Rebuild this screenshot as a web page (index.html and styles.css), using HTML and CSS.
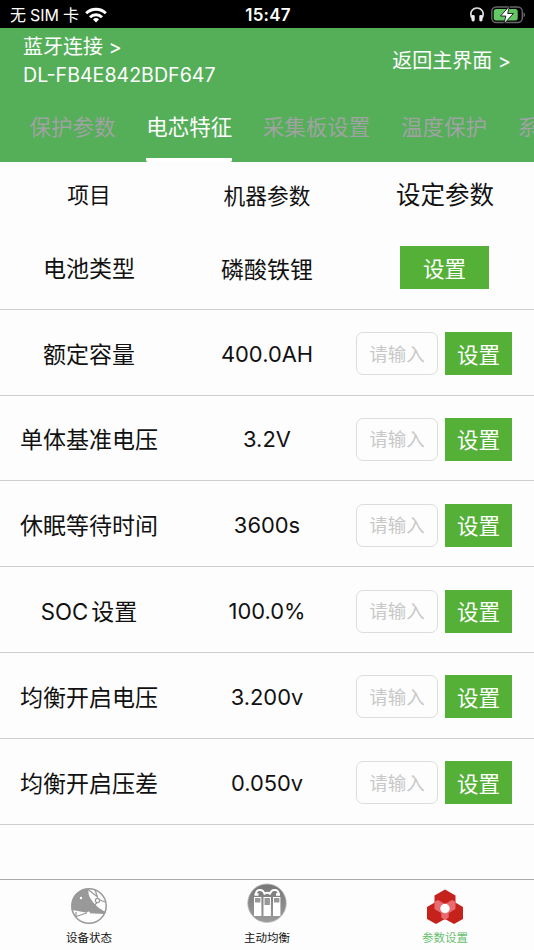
FILE: index.html
```html
<!DOCTYPE html>
<html lang="zh-CN">
<head>
  <meta charset="UTF-8">
  <meta name="viewport" content="width=device-width, initial-scale=1.0">
  <title>参数设置</title>
  <link rel="stylesheet" href="styles.css">
</head>
<body>
  <div class="status-bar">
    <div class="carrier">
      <span>无<span class="sim">SIM</span>卡</span>
      <svg class="wifi" viewBox="0 0 22 16" fill="none" stroke="#fff" stroke-width="3">
        <path d="M1.2 6.3a14 14 0 0 1 19.6 0"/>
        <path d="M5 10.3a8.6 8.6 0 0 1 12 0"/>
        <path d="M11 15.5l-3-3a4.3 4.3 0 0 1 6 0z" fill="#fff" stroke="none"/>
      </svg>
    </div>
    <div class="time">15:47</div>
    <div class="status-icons">
      <svg class="headphones" viewBox="0 0 14 15">
        <path d="M2 11C-1 5.500 2.500 1 7 1s8 4.500 5 10" fill="none" stroke="#ddd" stroke-width="1.700"/>
        <rect x="1.500" y="8" width="3.200" height="6.500" rx="1.400" fill="#eee"/>
        <rect x="9.300" y="8" width="3.200" height="6.500" rx="1.400" fill="#eee"/>
      </svg>
      <svg class="battery" viewBox="0 0 35 18">
        <rect x=".8" y="1" width="30.500" height="15.500" rx="4.500" fill="none" stroke="#676767" stroke-width="1.400"/>
        <path d="M32.500 6.300c2 .8 2 4.200 0 5z" fill="#676767"/>
        <rect x="2.700" y="2.900" width="24" height="11.700" rx="2.500" fill="#63c766"/>
        <path d="M18.500 0L9.500 10h5.300l-1.800 8 9.400-10.500h-5.700z" fill="#fff" stroke="#000" stroke-width=".8"/>
      </svg>
    </div>
  </div>

  <div class="header">
    <div class="header-top">
      <div class="device">
        <div>蓝牙连接 &gt;</div>
        <div class="device-name">DL-FB4E842BDF647</div>
      </div>
      <div class="back">返回主界面 &gt;</div>
    </div>
    <div class="tabs">
      <div class="tab">保护参数</div>
      <div class="tab active">电芯特征</div>
      <div class="tab">采集板设置</div>
      <div class="tab">温度保护</div>
      <div class="tab">系</div>
    </div>
  </div>

  <div class="content">
    <div class="row table-head">
      <div>项目</div>
      <div>机器参数</div>
      <div class="head-set">设定参数</div>
    </div>
    <div class="row">
      <div>电池类型</div>
      <div>磷酸铁锂</div>
      <div class="action center"><button class="set-btn wide">设置</button></div>
    </div>
    <div class="row">
      <div>额定容量</div>
      <div class="value">400.0AH</div>
      <div class="action"><input type="text" placeholder="请输入"><button class="set-btn">设置</button></div>
    </div>
    <div class="row">
      <div>单体基准电压</div>
      <div class="value">3.2V</div>
      <div class="action"><input type="text" placeholder="请输入"><button class="set-btn">设置</button></div>
    </div>
    <div class="row">
      <div>休眠等待时间</div>
      <div class="value">3600s</div>
      <div class="action"><input type="text" placeholder="请输入"><button class="set-btn">设置</button></div>
    </div>
    <div class="row">
      <div><span class="soc">SOC</span>设置</div>
      <div class="value">100.0%</div>
      <div class="action"><input type="text" placeholder="请输入"><button class="set-btn">设置</button></div>
    </div>
    <div class="row">
      <div>均衡开启电压</div>
      <div class="value">3.200v</div>
      <div class="action"><input type="text" placeholder="请输入"><button class="set-btn">设置</button></div>
    </div>
    <div class="row">
      <div>均衡开启压差</div>
      <div class="value">0.050v</div>
      <div class="action"><input type="text" placeholder="请输入"><button class="set-btn">设置</button></div>
    </div>
  </div>

  <div class="nav">
    <div class="nav-item">
      <svg viewBox="0 0 40 40">
        <path d="M3.500 27C1 18 3 9 10.500 5.500c3-2 6-2.500 9-2.500-.5 3 0 7 3 11 3.500 5 7 8.500 14.500 12l-2 2-14.500-.8L3.500 24z" fill="#999"/>
        <circle cx="20" cy="20" r="17.200" fill="none" stroke="#999" stroke-width="1.500"/>
        <g fill="none" stroke="#999" stroke-width="1.200">
          <path d="M7 30.500l11.500-3.700M7 26v5M19 3.500l9 7M26 3.800l2.700 8M28 16.500l-4.500 5M31 14l5 2"/>
          <circle cx="28.500" cy="14.500" r="2.100" fill="#fdfdfd"/>
        </g>
        <circle cx="12" cy="12" r="1.200" fill="#fff"/>
        <circle cx="19.500" cy="27" r="1.600" fill="#fff"/>
      </svg>
      <span>设备状态</span>
    </div>
    <div class="nav-item">
      <svg viewBox="0 0 40 40">
        <defs>
          <linearGradient id="disc" x1="0" y1="0" x2="0" y2="1">
            <stop offset="0" stop-color="#777"/>
            <stop offset="1" stop-color="#9b9b9b"/>
          </linearGradient>
        </defs>
        <circle cx="20" cy="17.200" r="19.300" fill="url(#disc)" stroke="#c4c4c4" stroke-width=".8"/>
        <g fill="#fff">
          <rect x="7" y="11" width="7.400" height="19"/>
          <rect x="16.500" y="11" width="7.400" height="19"/>
          <rect x="26" y="11" width="7.400" height="19"/>
        </g>
        <g fill="#999">
          <rect x="8" y="12" width="5.400" height="4.500"/>
          <rect x="17.500" y="12" width="5.400" height="7"/>
          <rect x="27" y="12" width="5.400" height="4.500"/>
        </g>
        <path d="M9 9C8 3 16 2 17.500 8M31.500 9C32.500 3 24.500 2 23 8M17 8.500c2-2.500 4.500-2.500 6.500 0" fill="none" stroke="#fff" stroke-width="2"/>
        <path d="M7.500 8.500h4M29 8.500h4" fill="none" stroke="#fff" stroke-width="2.400"/>
      </svg>
      <span>主动均衡</span>
    </div>
    <div class="nav-item selected">
      <svg viewBox="0 0 40 40">
        <g fill="#c5221b">
          <path d="M20 3.500l10.500 6v11.800L20 27.300 9.500 21.300V9.500z"/>
          <path d="M11 15.700l9 5.200v12l-9 5.100-9-5.100v-12z"/>
          <path d="M29 15.700l9 5.200v12l-9 5.100-9-5.100v-12z"/>
        </g>
        <g fill="#e96b70">
          <path d="M9.500 15.500l3.500-1.600 7 4v9L16 27l-6.500-4z"/>
          <path d="M30.500 15.500L27 13.900l-7 4v9l4 .1 6.500-4z"/>
          <path d="M16.300 25h7.400v6.500L20 34l-3.700-2.500z"/>
        </g>
        <circle cx="20" cy="22.500" r="4.700" fill="#fff"/>
      </svg>
      <span>参数设置</span>
    </div>
  </div>
</body>
</html>
```

FILE: styles.css
```css
* {
  box-sizing: border-box;
}

body {
  margin: 0;
  height: 950px;
  display: flex;
  flex-direction: column;
  overflow: hidden;
  background-color: #fdfdfd;
  color: #111;
  font-family: Inter, "Noto Sans CJK SC", sans-serif;
  font-weight: 400;
}

/* 状态栏 */
.status-bar {
  height: 28px;
  flex: none;
  display: grid;
  grid-template-columns: 1fr auto 1fr;
  align-items: center;
  padding: 1px 8px 0 10px;
  background-color: #000;
  color: #fff;
}

.carrier {
  display: flex;
  align-items: center;
  gap: 6px;
  font-size: 16px;
  line-height: 26px;
}

.sim {
  margin: 0 4px;
}

.wifi {
  width: 22px;
  height: 16px;
}

.time {
  font-size: 17px;
  font-weight: 600;
  letter-spacing: 0.2px;
}

.status-icons {
  display: flex;
  justify-content: flex-end;
  align-items: center;
  gap: 7px;
}

.headphones {
  width: 14px;
  height: 15px;
}

.battery {
  width: 35px;
  height: 18px;
}

/* 顶部 */
.header {
  height: 134px;
  flex: none;
  background-color: #55ae58;
  color: #fff;
}

.header-top {
  height: 64px;
  display: flex;
  justify-content: space-between;
  align-items: center;
  padding: 2px 23px 0;
  font-size: 20px;
  line-height: 28px;
}

.device-name {
  font-size: 19.6px;
}

.tabs {
  height: 70px;
  display: flex;
  gap: 30.6px;
  padding-left: 29.6px;
  overflow: hidden;
}

.tab {
  flex: none;
  font-size: 21.5px;
  line-height: 71px;
  color: #9fa3a2;
}

.tab.active {
  height: 70px;
  color: #fff;
  border-bottom: 4px solid #fff;
  border-radius: 2px;
}

/* 参数列表 */
.content {
  flex: 1;
}

.row {
  height: 85.8px;
  display: grid;
  grid-template-columns: 1fr 1fr 1fr;
  align-items: center;
  text-align: center;
  padding-top: 3px;
  border-bottom: 1.6px solid #cecece;
  font-size: 23px;
}

.row > div:first-child {
  margin-top: -2px;
}

.table-head {
  height: 62px;
  border-bottom: none;
  font-size: 21.7px;
}

.head-set {
  font-size: 24.5px;
  margin-top: -3px;
}

.value {
  font-size: 21.9px;
}

.soc {
  margin-right: 3px;
  font-size: 22.2px;
}

.action {
  display: flex;
  justify-content: flex-end;
  gap: 7px;
  padding-right: 22px;
}

.action.center {
  justify-content: center;
  padding-right: 1px;
}

.action input {
  width: 82px;
  height: 43px;
  padding: 0;
  border: 1px solid #ddd;
  border-radius: 7px;
  background-color: #fdfdfd;
  text-align: center;
  font: inherit;
  font-size: 18.5px;
}

.action input::placeholder {
  color: #c8c8c8;
}

.set-btn {
  width: 67px;
  height: 43px;
  padding: 0 0 1px;
  border: none;
  background-color: #55b037;
  color: #fff;
  font: inherit;
  font-size: 21.5px;
}

.set-btn.wide {
  width: 89px;
}

/* 底部导航 */
.nav {
  height: 71px;
  flex: none;
  display: grid;
  grid-template-columns: 1fr 1fr 1fr;
  border-top: 1px solid #aaa;
}

.nav-item {
  display: flex;
  flex-direction: column;
  align-items: center;
  padding-top: 6px;
  font-size: 11.5px;
  line-height: 24px;
}

.nav-item svg {
  width: 40px;
  height: 40px;
  overflow: visible;
}

.nav-item.selected {
  color: #6abf70;
}
```
